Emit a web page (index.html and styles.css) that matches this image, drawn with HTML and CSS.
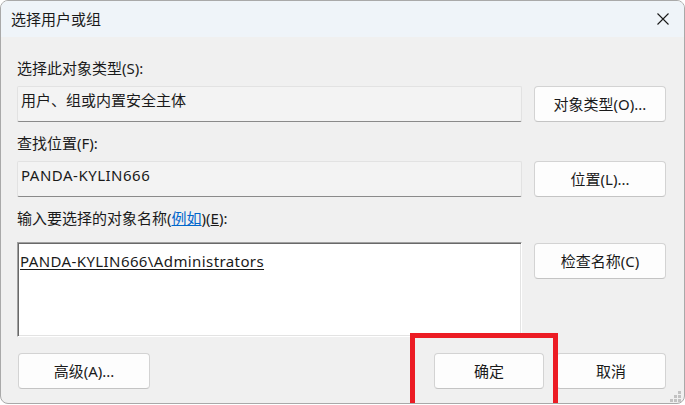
FILE: index.html
```html
<!DOCTYPE html>
<html lang="zh-CN">
<head>
<meta charset="utf-8">
<title>选择用户或组</title>
<link rel="stylesheet" href="styles.css">
</head>
<body>
<div class="window">
  <div class="titlebar">
    <span class="title">选择用户或组</span>
    <svg class="close" width="12" height="12" viewBox="0 0 12 12"><path d="M0.5 0.5 L11.5 11.5 M11.5 0.5 L0.5 11.5" stroke="#1a1a1a" stroke-width="1.1" fill="none"/></svg>
  </div>
  <div class="content">
    <div class="label first">选择此对象类型(S):</div>
    <div class="row">
      <div class="field">用户、组或内置安全主体</div>
      <div class="btn">对象类型(O)...</div>
    </div>
    <div class="label">查找位置(F):</div>
    <div class="row">
      <div class="field latin">PANDA-KYLIN666</div>
      <div class="btn">位置(L)...</div>
    </div>
    <div class="label third">输入要选择的对象名称(<span class="link">例如</span>)(<u>E</u>):</div>
    <div class="row tall">
      <div class="names"><span class="name">PANDA-KYLIN666\Administrators</span></div>
      <div class="btn check">检查名称(C)</div>
    </div>
    <div class="footer">
      <div class="btn">高级(A)...</div>
      <div class="actions">
        <div class="btn small">确定</div>
        <div class="btn small">取消</div>
      </div>
    </div>
  </div>
  <svg class="grip" width="11" height="11" viewBox="0 0 11 11">
    <rect x="8" y="0" width="3" height="3" fill="#c2c2c2"/>
    <rect x="4" y="4" width="3" height="3" fill="#c2c2c2"/>
    <rect x="8" y="4" width="3" height="3" fill="#c2c2c2"/>
    <rect x="0" y="8" width="3" height="3" fill="#c2c2c2"/>
    <rect x="4" y="8" width="3" height="3" fill="#c2c2c2"/>
    <rect x="8" y="8" width="3" height="3" fill="#c2c2c2"/>
  </svg>
  <div class="highlight"></div>
</div>
</body>
</html>
```
FILE: styles.css
```css
* { box-sizing: border-box; }
html, body { margin: 0; padding: 0; background: #ffffff; }
body {
  font-family: "Noto Sans", "Noto Sans CJK SC", sans-serif;
  font-size: 15px;
  color: #1a1a1a;
  width: 685px;
  height: 405px;
  overflow: hidden;
}
.window {
  position: relative;
  width: 685px;
  height: 404px;
  border: 1px solid #a9a9a9;
  border-radius: 8px;
  background: #f0f0f0;
  overflow: hidden;
}
.titlebar {
  height: 36px;
  background: #eff4f9;
  display: flex;
  align-items: center;
  justify-content: space-between;
  padding: 0 15px 0 10px;
}
.title { line-height: 20px; margin-top: -1px; }
.close { display: block; }
.content {
  padding: 0 18px 0 16px;
}
.label {
  height: 20px;
  line-height: 20px;
  margin-top: 11px;
  margin-bottom: 8px;
  white-space: nowrap;
}
.label.first { margin-top: 21px; }
.label.third { margin-bottom: 14px; }
.link { color: #0066cc; text-decoration: underline; }
.row {
  display: flex;
  gap: 12px;
  height: 36px;
}
.row.tall { height: 95px; }
.field {
  width: 505px;
  height: 36px;
  background: #f3f3f3;
  border: 1px solid #e2e2e2;
  border-bottom-color: #8a8a8a;
  border-radius: 2px;
  padding: 3px 3px 0 3px;
  line-height: 20px;
  white-space: nowrap;
}
.field.latin { letter-spacing: 0.5px; }
.names {
  width: 505px;
  height: 95px;
  background: #ffffff;
  border: 1px solid;
  border-color: #a0a0a0 #ffffff #ffffff #a0a0a0;
  box-shadow: inset 1px 1px 0 #696969, inset -1px -1px 0 #e3e3e3;
  padding: 8px 2px 0 2px;
  line-height: 20px;
}
.name { text-decoration: underline; text-underline-offset: 2px; letter-spacing: 0.4px; }
.btn {
  width: 132px;
  height: 36px;
  background: #fdfdfd;
  border: 1px solid #d3d3d3;
  border-bottom-color: #c4c4c4;
  border-radius: 4px;
  display: flex;
  align-items: center;
  justify-content: center;
  white-space: nowrap;
  line-height: 20px;
}
.btn.check { margin-top: 1px; }
.footer {
  margin-top: 16px;
  padding-left: 1px;
  display: flex;
  justify-content: space-between;
}
.actions { display: flex; gap: 12px; }
.btn.small { width: 110px; }
.grip {
  position: absolute;
  right: 3px;
  bottom: 1px;
}
.highlight {
  position: absolute;
  left: 409px;
  top: 332px;
  width: 148px;
  height: 90px;
  border: 5px solid #ec1c24;
}
```
